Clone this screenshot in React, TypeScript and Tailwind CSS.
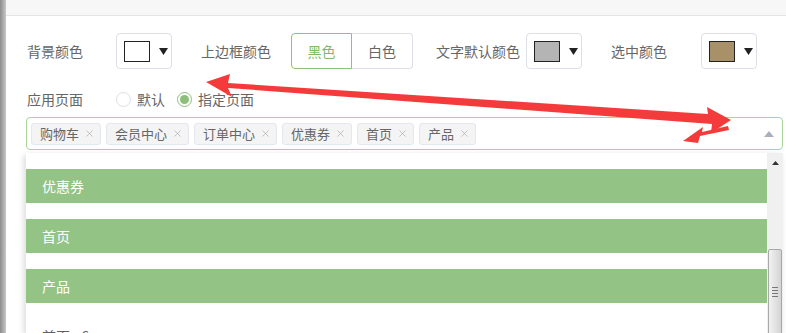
import { X } from 'lucide-react';
import React from 'react';

const font = { fontFamily: '"Noto Sans CJK SC", "Noto Sans", sans-serif' };

function Caret() {
  return (
    <svg width="9" height="8" viewBox="0 0 9 8" className="ml-[9px]">
      <polygon points="0,1 9,1 4.5,8" fill="#222" />
    </svg>
  );
}

function Picker({ color }: { color: string }) {
  return (
    <div className="flex h-[36px] w-[56px] items-center rounded-[4px] border border-[#dcdfe6] bg-white pl-[7px]">
      <div className="h-[21px] w-[26px] border border-[#222]" style={{ backgroundColor: color }} />
      <Caret />
    </div>
  );
}

function Tag({ label }: { label: string }) {
  return (
    <div className="flex h-[22px] items-center gap-[5px] rounded-[3px] border border-[#e4e7ed] bg-[#f4f4f5] pl-[8px] pr-[5px] text-[13px] text-[#666]">
      <span>{label}</span>
      <X size={11} strokeWidth={1.4} color="#a3a6ad" />
    </div>
  );
}

const tags = ['购物车', '会员中心', '订单中心', '优惠券', '首页', '产品'];
const options = [
  { label: '优惠券', selected: true },
  { label: '首页', selected: true },
  { label: '产品', selected: true },
  { label: '首页 - 6', selected: false },
];

export default function App() {
  return (
    <div className="relative flex h-[333px] w-[786px] overflow-hidden bg-white" style={font}>
      {/* backdrop edge */}
      <div className="w-[6px] shrink-0 bg-gradient-to-r from-[#8c8c8c] to-[#c8c8c8]" />

      <div className="flex min-h-0 flex-1 flex-col">
        {/* modal header strip */}
        <div className="h-[16px] shrink-0 border-b border-[#e4e4e4] bg-[#f7f7f7]" />

        {/* colour row */}
        <div className="mt-[17px] flex shrink-0 items-center pl-[21px] text-[14px] text-[#666]">
          <span className="w-[89px]">背景颜色</span>
          <Picker color="#ffffff" />
          <span className="ml-[29px] w-[90px]">上边框颜色</span>
          <div className="flex h-[36px] text-[14px]">
            <div className="flex w-[61px] items-center justify-center rounded-l-[4px] border border-[#8ec27c] text-[#7dbb6a]">黑色</div>
            <div className="flex w-[61px] items-center justify-center rounded-r-[4px] border border-l-0 border-[#dcdfe6] text-[#666]">白色</div>
          </div>
          <span className="ml-[23px] w-[90px]">文字默认颜色</span>
          <Picker color="#b4b4b4" />
          <span className="ml-[29px] w-[90px]">选中颜色</span>
          <Picker color="#a89068" />
        </div>

        {/* page row */}
        <div className="mt-[20px] flex h-[20px] shrink-0 items-center pl-[21px] text-[14px] text-[#666]">
          <span className="w-[89px]">应用页面</span>
          <div className="h-[15px] w-[15px] rounded-full border border-[#dcdfe6]" />
          <span className="ml-[6px]">默认</span>
          <div className="ml-[12px] flex h-[15px] w-[15px] items-center justify-center rounded-full border border-[#8cc07a]">
            <div className="h-[9px] w-[9px] rounded-full bg-[#8cc07a]" />
          </div>
          <span className="ml-[6px]">指定页面</span>
        </div>

        {/* multi select */}
        <div className="ml-[20px] mr-[3px] mt-[8px] flex h-[33px] shrink-0 items-center gap-[5px] rounded-[4px] border border-[#a9d59a] pl-[4px] pr-[8px]">
          {tags.map((t) => (
            <Tag key={t} label={t} />
          ))}
          <svg width="10" height="6" viewBox="0 0 10 6" className="ml-auto">
            <polygon points="5,0 10,6 0,6" fill="#a8b0bd" />
          </svg>
        </div>

        {/* dropdown */}
        <div className="ml-[20px] mr-[3px] mt-[3px] flex min-h-0 flex-1 overflow-hidden bg-white shadow-[-2px_2px_6px_rgba(0,0,0,0.15)]">
          <div className="flex flex-1 flex-col gap-[16px] pt-[16px] text-[14px]">
            {options.map((o) =>
              o.selected ? (
                <div key={o.label} className="flex h-[34px] shrink-0 items-center bg-[#93c385] pl-[16px] text-white">
                  {o.label}
                </div>
              ) : (
                <div key={o.label} className="flex h-[34px] shrink-0 items-center pl-[16px] text-[#606266]">
                  {o.label}
                </div>
              )
            )}
          </div>
          {/* scrollbar */}
          <div className="flex w-[16px] shrink-0 flex-col items-center bg-[#f0f0f0]">
            <svg width="7" height="4" viewBox="0 0 7 4" className="mt-[8px] shrink-0">
              <polygon points="3.5,0 7,4 0,4" fill="#333" />
            </svg>
            <div className="mt-[84px] flex h-[120px] w-[14px] shrink-0 flex-col items-center rounded-t-[2px] border border-[#a8a8a8] bg-gradient-to-r from-[#f2f2f2] to-[#d4d4d4] pt-[37px]">
              <div className="flex flex-col gap-[2px]">
                <div className="h-px w-[6px] bg-[#777]" />
                <div className="h-px w-[6px] bg-[#777]" />
                <div className="h-px w-[6px] bg-[#777]" />
                <div className="h-px w-[6px] bg-[#777]" />
              </div>
            </div>
          </div>
        </div>
      </div>

      {/* red annotation arrows */}
      <svg className="pointer-events-none absolute left-0 top-0" width="786" height="333" viewBox="0 0 786 333">
        <polygon
          points="206,82 230,74 228,83 708,114 707,107 731,120 711,133 712,124 228,88 232,97"
          fill="#f43b3b"
        />
        <polygon points="728,126 702,132 703,127 683,141 698,143 700,136 729,130" fill="#f43b3b" />
      </svg>
    </div>
  );
}
